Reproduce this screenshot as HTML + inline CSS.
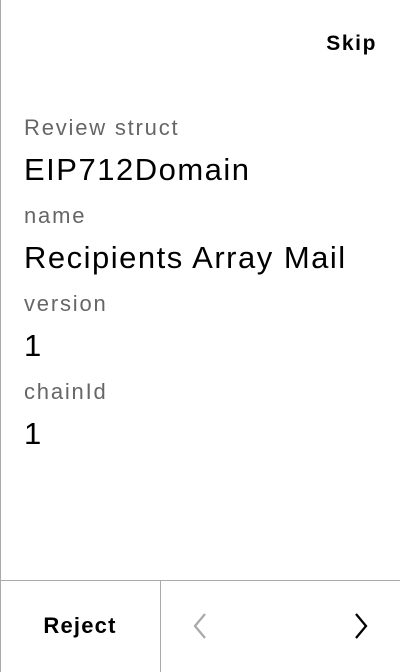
<!DOCTYPE html>
<html><head><style>
*{margin:0;padding:0;box-sizing:border-box}
body{width:400px;height:672px;background:#fff;position:relative;overflow:hidden;font-family:"Liberation Sans",sans-serif}
.l{position:absolute;left:24px;font-size:22px;line-height:24px;color:#666;letter-spacing:1.8px}
.v{position:absolute;left:24px;font-size:31px;line-height:32px;color:#000;letter-spacing:1.5px}
</style></head><body>
<div style="position:absolute;left:0;top:0;width:1px;height:672px;background:#aaa"></div>
<div style="position:absolute;right:23px;top:32px;font-size:21px;font-weight:bold;line-height:24px;letter-spacing:1.6px">Skip</div>
<div class="l" style="top:116px">Review struct</div>
<div class="v" style="top:154px">EIP712Domain</div>
<div class="l" style="top:204px">name</div>
<div class="v" style="top:242px">Recipients Array Mail</div>
<div class="l" style="top:292px">version</div>
<div class="v" style="top:330px">1</div>
<div class="l" style="top:380px">chainId</div>
<div class="v" style="top:418px">1</div>
<div style="position:absolute;left:0;top:580px;width:400px;height:1px;background:#aaa"></div>
<div style="position:absolute;left:160px;top:580px;width:1px;height:92px;background:#aaa"></div>
<div style="position:absolute;left:0;width:160px;top:614px;text-align:center;font-size:22px;font-weight:bold;line-height:24px;letter-spacing:1.2px">Reject</div>
<svg style="position:absolute;left:188px;top:610px" width="24" height="32"><path d="M17 4 L7 16 L17 28" fill="none" stroke="#aaa" stroke-width="2.3"/></svg>
<svg style="position:absolute;left:349px;top:610px" width="24" height="32"><path d="M7 4 L17 16 L7 28" fill="none" stroke="#000" stroke-width="2.3"/></svg>
</body></html>
